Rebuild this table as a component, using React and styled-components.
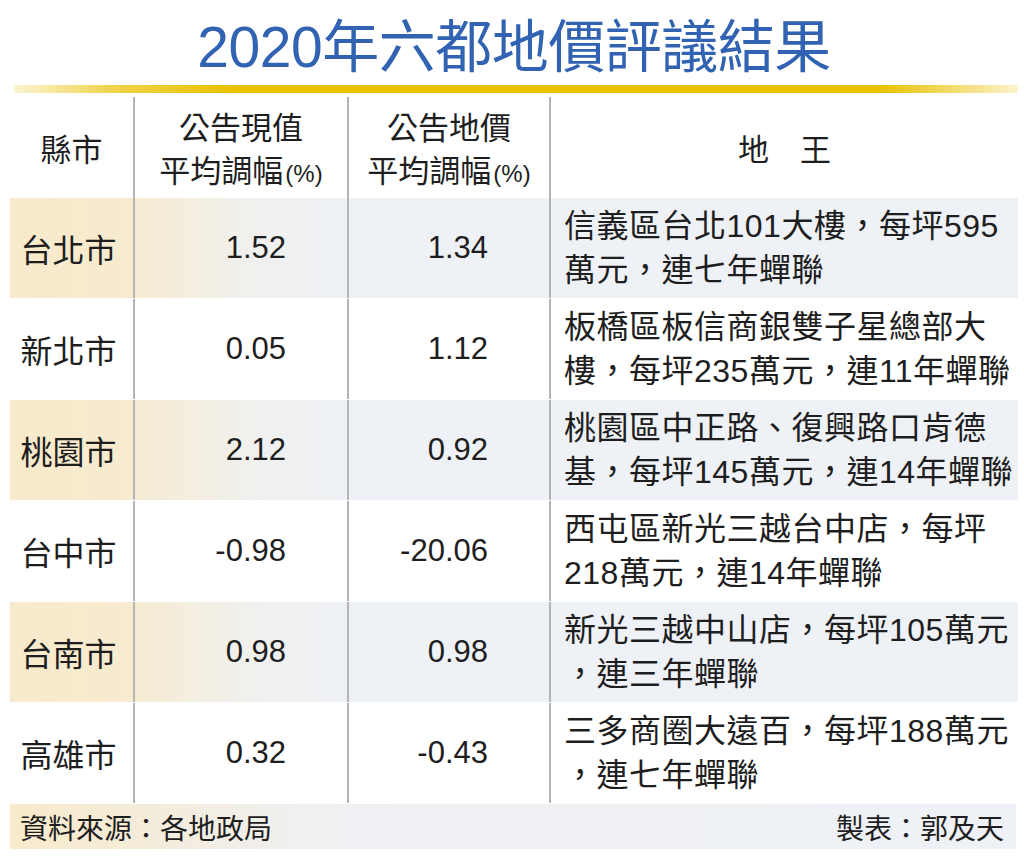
import styled, { createGlobalStyle } from "styled-components";

const GlobalStyle = createGlobalStyle`
  body {
    margin: 0;
    background: #ffffff;
    font-family: "Liberation Sans", "Noto Sans CJK TC", sans-serif;
    color: #1e1e1e;
  }
`;

const rows = [
  { city: "台北市", now: "1.52", land: "1.34", king: ["信義區台北101大樓，每坪595", "萬元，連七年蟬聯"] },
  { city: "新北市", now: "0.05", land: "1.12", king: ["板橋區板信商銀雙子星總部大", "樓，每坪235萬元，連11年蟬聯"] },
  { city: "桃園市", now: "2.12", land: "0.92", king: ["桃園區中正路、復興路口肯德", "基，每坪145萬元，連14年蟬聯"] },
  { city: "台中市", now: "-0.98", land: "-20.06", king: ["西屯區新光三越台中店，每坪", "218萬元，連14年蟬聯"] },
  { city: "台南市", now: "0.98", land: "0.98", king: ["新光三越中山店，每坪105萬元", "，連三年蟬聯"] },
  { city: "高雄市", now: "0.32", land: "-0.43", king: ["三多商圈大遠百，每坪188萬元", "，連七年蟬聯"] },
];

export default function App() {
  return (
    <>
      <GlobalStyle />
      <Page>
        <Title>2020年六都地價評議結果</Title>
        <GoldLine />
        <Table>
          <HeadCell>縣市</HeadCell>
          <HeadCell $divider>
            <Lines>
              公告現值
              <br />
              平均調幅<Small>(%)</Small>
            </Lines>
          </HeadCell>
          <HeadCell $divider>
            <Lines>
              公告地價
              <br />
              平均調幅<Small>(%)</Small>
            </Lines>
          </HeadCell>
          <HeadCell $divider>地　王</HeadCell>

          {rows.map((row, i) => (
            <Row key={row.city} $shaded={i % 2 === 0}>
              <CityCell>{row.city}</CityCell>
              <NumberCell $divider>{row.now}</NumberCell>
              <NumberCell $divider>{row.land}</NumberCell>
              <KingCell $divider>
                <Lines>
                  {row.king[0]}
                  <br />
                  {row.king[1]}
                </Lines>
              </KingCell>
            </Row>
          ))}
        </Table>
        <Footer>
          <span>資料來源：各地政局</span>
          <span>製表：郭及天</span>
        </Footer>
      </Page>
    </>
  );
}

const Page = styled.div`
  width: 1024px;
  height: 856px;
  display: flex;
  flex-direction: column;
  padding: 0 6px 0 10px;
  box-sizing: border-box;
`;

const Title = styled.h1`
  margin: 0;
  height: 84px;
  display: flex;
  align-items: center;
  justify-content: center;
  font-size: 57px;
  font-weight: 400;
  color: #3163b2;
  letter-spacing: -0.5px;
`;

const GoldLine = styled.div`
  height: 8px;
  margin: 1px 0 0 4px;
  background: linear-gradient(
    to right,
    #fbf4d2 0%,
    #f0d34a 10%,
    #e8c100 22%,
    #e8c100 86%,
    #fbf2cc 100%
  );
`;

const Table = styled.div`
  margin-top: 4px;
  display: grid;
  grid-template-columns: 123px 214px 202px 1fr;
  grid-auto-rows: 101px;
`;

const Cell = styled.div`
  display: flex;
  align-items: center;
  font-size: 32px;
  border-left: ${(p) => (p.$divider ? "2px solid #b4b4b4" : "none")};
  box-sizing: border-box;
`;

const Lines = styled.div`
  white-space: nowrap;
`;

const HeadCell = styled(Cell)`
  justify-content: center;
  text-align: center;
  line-height: 43px;
  font-size: 31px;
  padding-top: 6px;
`;

const Small = styled.span`
  font-size: 24px;
  margin-left: 2px;
`;

const Row = styled.div`
  grid-column: 1 / -1;
  display: grid;
  grid-template-columns: subgrid;
  background: ${(p) =>
    p.$shaded
      ? "linear-gradient(to right, #f8eacb 0%, #f7ebcf 11%, #f0f0ee 24%, #eef1f6 34%, #eef1f6 100%)"
      : "#ffffff"};
  border-bottom: 1px solid #ffffff;
`;

const CityCell = styled(Cell)`
  justify-content: center;
  padding-right: 6px;
`;

const NumberCell = styled(Cell)`
  justify-content: flex-end;
  padding-right: 61px;
  font-size: 31px;
`;

const KingCell = styled(Cell)`
  padding-left: 13px;
  line-height: 44px;
  letter-spacing: 0.5px;
`;

const Footer = styled.div`
  height: 45px;
  margin-right: 2px;
  display: flex;
  align-items: center;
  justify-content: space-between;
  padding: 0 12px 0 10px;
  font-size: 28px;
  background: linear-gradient(
    to right,
    #f8eacb 0%,
    #f5ecd8 12%,
    #eff0f2 30%,
    #eef1f6 100%
  );
`;
